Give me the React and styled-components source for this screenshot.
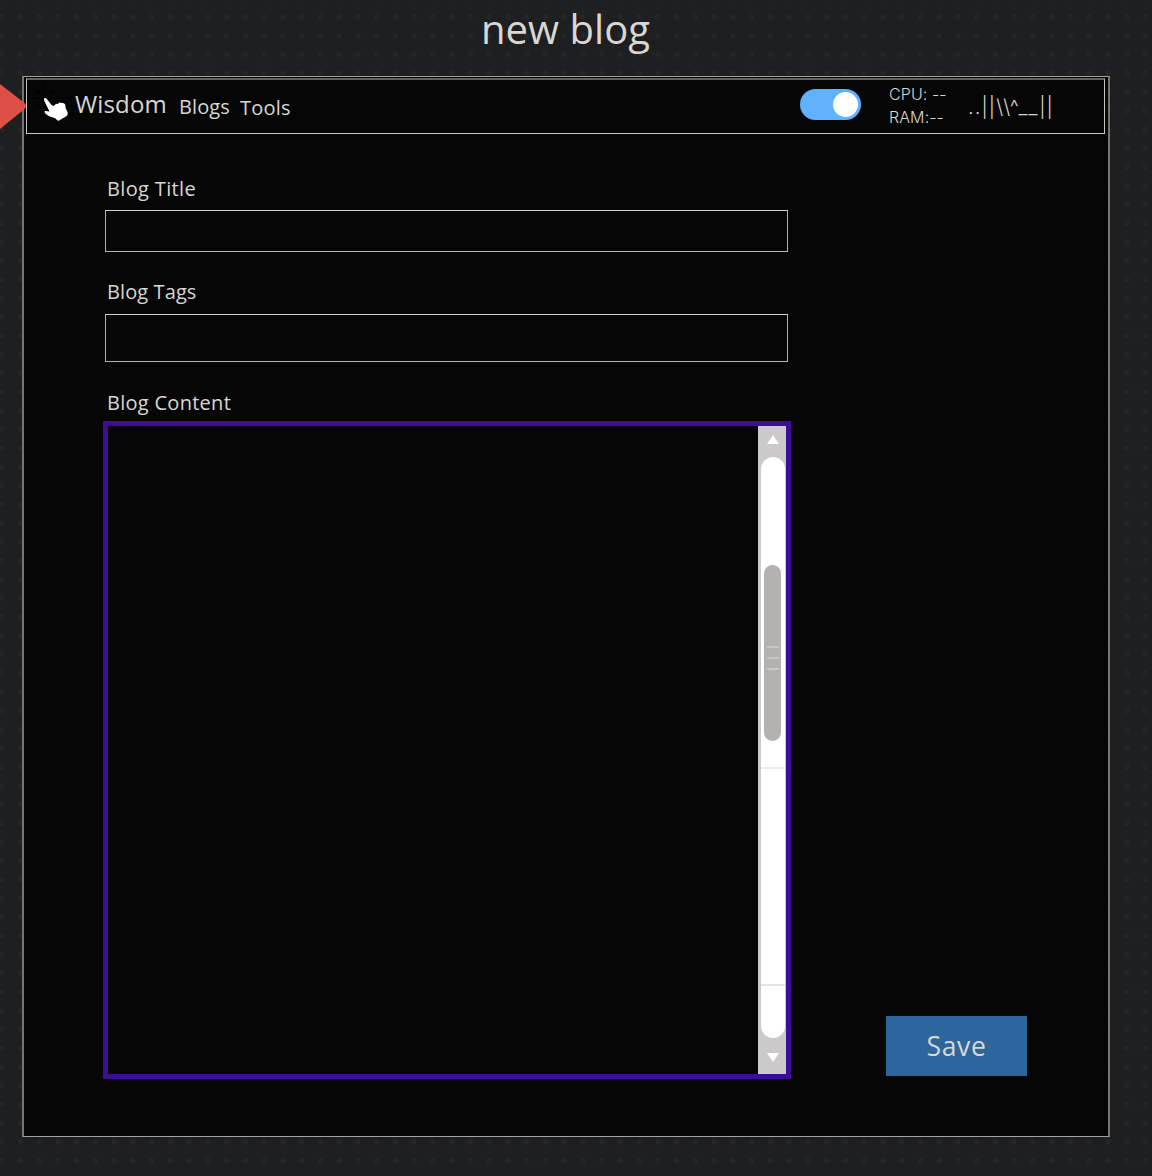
import React from "react";
import styled, { createGlobalStyle } from "styled-components";

const GlobalStyle = createGlobalStyle`
  * { box-sizing: border-box; }
  body {
    margin: 0;
    background: #1e1f21;
    color: #d9d7d2;
    font-family: "Open Sans", "Noto Sans", sans-serif;
  }
`;

const Canvas = styled.main`
  position: relative;
  width: 1152px;
  height: 1176px;
  overflow: hidden;
  background-color: #1e1f21;
  background-image: radial-gradient(circle at center, #252628 2.5px, transparent 3.1px);
  background-size: 18.75px 18.75px;
  background-position: -7.7px 7.6px;
`;

const Heading = styled.h1`
  margin: 0;
  height: 76px;
  padding-left: 481px;
  font-size: 40px;
  font-weight: 400;
  line-height: 57px;
  letter-spacing: 0.05px;
  white-space: nowrap;
`;

const Marker = styled.svg`
  position: absolute;
  left: 0;
  top: 84px;
`;

const Frame = styled.section`
  display: flex;
  flex-direction: column;
  width: 1088px;
  height: 1061px;
  margin-left: 22px;
  padding: 1px 3px 0 2px;
  background: #060606;
  border-style: solid;
  border-width: 1px 2px;
  border-color: #a3a1a3 #777574;
`;

const NavBar = styled.header`
  display: flex;
  align-items: flex-start;
  width: 1079px;
  height: 56px;
  flex: none;
  border: 1px solid #c9c7c2;
  border-top: 2px solid #62615f;
`;

const HandIcon = styled.svg`
  flex: none;
  width: 44px;
  height: 46px;
`;

const Brand = styled.span`
  width: 104px;
  margin-left: 4px;
  font-size: 24px;
  font-weight: 400;
  line-height: 48px;
  letter-spacing: 0.15px;
`;

const NavLink = styled.a`
  width: ${(p) => p.$width}px;
  padding-top: ${(p) => p.$drop}px;
  font-size: 20px;
  font-weight: 400;
  line-height: 50px;
  letter-spacing: ${(p) => p.$track}px;
`;

const Toggle = styled.button`
  display: flex;
  align-items: center;
  justify-content: flex-end;
  width: 61px;
  height: 31px;
  margin: 9px 28px 0 auto;
  padding: 0 3px;
  border: 0;
  border-radius: 16px;
  background: #61b2fd;
`;

const Knob = styled.span`
  width: 25px;
  height: 25px;
  border-radius: 50%;
  background: #fff;
`;

const Stats = styled.div`
  width: 79px;
  padding-top: 3px;
  font-family: Inter, sans-serif;
  font-size: 16px;
  font-weight: 300;
  line-height: 23px;
  letter-spacing: 0.1px;
  white-space: pre;
`;

const Signal = styled.span`
  width: 136px;
  font-family: Inter, sans-serif;
  font-size: 20px;
  font-weight: 350;
  line-height: 54px;
  letter-spacing: 1.1px;
  white-space: nowrap;
`;

const Editor = styled.div`
  display: flex;
  align-items: flex-end;
  justify-content: space-between;
  padding: 39px 78px 0 77px;
`;

const Form = styled.form`
  display: flex;
  flex-direction: column;
  width: 688px;
`;

const Label = styled.label`
  height: ${(p) => p.$height}px;
  padding-left: 4px;
  font-size: 20px;
  font-weight: 400;
  line-height: 32px;
  letter-spacing: ${(p) => p.$track}px;
`;

const Field = styled.input`
  width: 683px;
  height: ${(p) => p.$height}px;
  margin: 0 0 ${(p) => p.$gap}px 2px;
  padding: 0 10px;
  background: transparent;
  color: inherit;
  font: inherit;
  border: 1px solid #b5b3af;
  border-top-color: #d2d0cb;
  border-radius: 0;
`;

const ContentBox = styled.div`
  display: flex;
  justify-content: flex-end;
  height: 658px;
  border: 5px solid #3d0d96;
`;

const ScrollBar = styled.div`
  display: flex;
  flex-direction: column;
  align-items: center;
  width: 28px;
  background: #cbc9c9;
  padding-left: 1px;
`;

const Arrow = styled.svg`
  flex: none;
  width: 14px;
  height: 10px;
  margin: ${(p) => p.$margin};
`;

const Track = styled.div`
  display: flex;
  flex-direction: column;
  align-items: center;
  width: 24px;
  height: 581px;
  border-radius: 12px;
  background:
    linear-gradient(#ececec, #ececec) 0 310px / 100% 2px no-repeat,
    linear-gradient(#e4e4e4, #e4e4e4) 0 527px / 100% 2px no-repeat,
    #fff;
`;

const Thumb = styled.div`
  display: flex;
  flex-direction: column;
  align-items: center;
  justify-content: center;
  gap: 9px;
  width: 17px;
  height: 176px;
  margin-top: 108px;
  padding-top: 10px;
  border-radius: 9px;
  background: #b4b2b1;
`;

const Grip = styled.span`
  width: 12px;
  height: 2px;
  background: #cac8c7;
`;

const SaveButton = styled.button`
  width: 141px;
  height: 60px;
  margin-bottom: 3px;
  padding: 0;
  border: 0;
  background: #2d669d;
  color: #d9d7d2;
  font-family: inherit;
  font-size: 26.5px;
  font-weight: 400;
  line-height: 60px;
  letter-spacing: 0.7px;
`;

export default function App() {
  return (
    <>
      <GlobalStyle />
      <Canvas>
        <Heading>new blog</Heading>
        <Frame>
          <NavBar>
            <HandIcon viewBox="27 80 44 46">
              <path
                d="M44.8 92v-7M40 94l-4-4M38.500 98h-6M40 103l-4 4M50 94l4-4M52 98h6"
                stroke="#000"
                strokeWidth="1.6"
              />
              <path
                d="M44.300 98.200q1.400-.7 2.500.8l5 6.300q1.400 1 2.800-.1 1.300-1.800 3.200-1.300 2-2.200 3.800-.8 2.500-.7 3.600 1.400l.5 3.800 2 4.200q.2 2-.7 3.200l-8.200 5q-1 .3-1.800-.6-1.600-2.200-4-2.500-4.300-.6-7.700-4-1.200-1.800-.4-2.500 1.900-.6 4.100.5l.4-.4-5.200-10.500q-.6-1.700.1-2.500z"
                fill="#fff"
              />
            </HandIcon>
            <Brand>Wisdom</Brand>
            <NavLink $width={61} $drop={2} $track={0.1}>Blogs</NavLink>
            <NavLink $width={60} $drop={3} $track={0.2}>Tools</NavLink>
            <Toggle type="button" aria-label="Theme"><Knob /></Toggle>
            <Stats>{"CPU: --\nRAM:--"}</Stats>
            <Signal>{"..||\\\\^__||"}</Signal>
          </NavBar>
          <Editor>
            <Form>
              <Label $height={37} $track={0.35}>Blog Title</Label>
              <Field $height={42} $gap={24} aria-label="Blog Title" />
              <Label $height={38} $track={0.1}>Blog Tags</Label>
              <Field $height={48} $gap={25} aria-label="Blog Tags" />
              <Label $height={34} $track={0.28}>Blog Content</Label>
              <ContentBox>
                <ScrollBar>
                  <Arrow viewBox="0 0 14 10" $margin="9px 0 12px 1px">
                    <path d="M7 0l6 9H1z" fill="#fff" />
                  </Arrow>
                  <Track>
                    <Thumb><Grip /><Grip /><Grip /></Thumb>
                  </Track>
                  <Arrow viewBox="0 0 14 10" $margin="15px 0 0 1px">
                    <path d="M1 0h12L7 9z" fill="#fff" />
                  </Arrow>
                </ScrollBar>
              </ContentBox>
            </Form>
            <SaveButton type="button">Save</SaveButton>
          </Editor>
        </Frame>
        <Marker width="27" height="45" viewBox="0 0 27 45">
          <path d="M0 0l24.500 19q3 3 0 6L0 45z" fill="#de5046" />
        </Marker>
      </Canvas>
    </>
  );
}
